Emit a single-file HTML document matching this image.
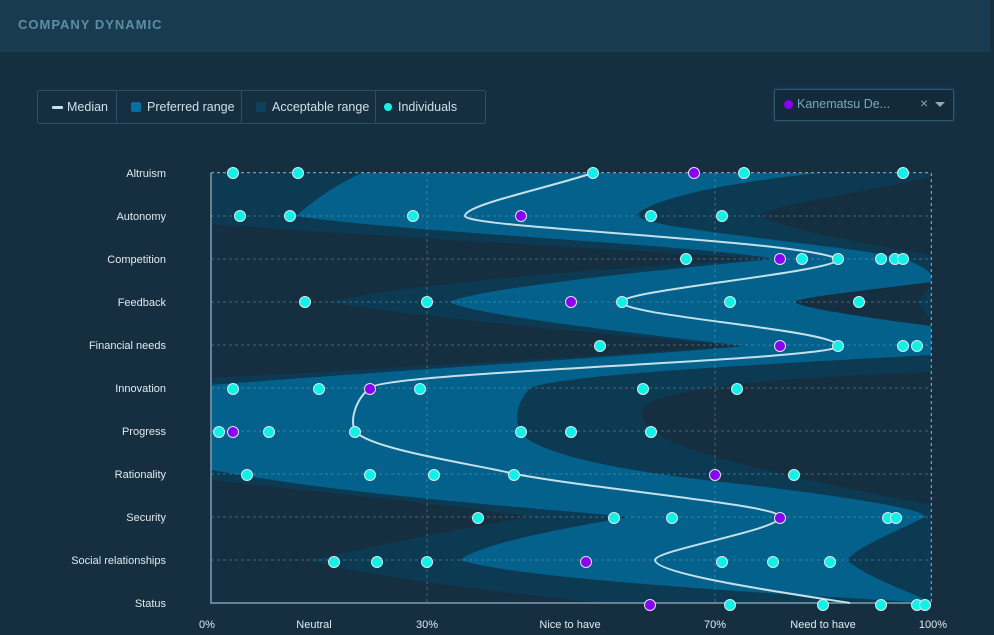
<!DOCTYPE html>
<html><head><meta charset="utf-8"><style>
html,body{margin:0;padding:0;}
body{width:994px;height:635px;background:#152f41;font-family:"Liberation Sans",sans-serif;position:relative;overflow:hidden;}
.hdr{position:absolute;left:0;top:0;width:990px;height:52px;background:#183b4f;}
.hdr span{position:absolute;left:18px;top:17px;font-size:13px;letter-spacing:1px;color:#5e8da6;font-weight:bold;}
.legend{position:absolute;left:37px;top:90px;width:447px;height:32px;border:1px solid #2e5063;border-radius:3px;font-size:12.5px;color:#cfe0e8;}
.legend div{position:absolute;top:0;height:32px;line-height:32px;}
.sep{position:absolute;top:0;width:1px;height:32px;background:#2e5063;}
.dd{position:absolute;left:774px;top:89px;width:178px;height:30px;border:1px solid #2d5a72;border-radius:2px;background:#132a3b;box-shadow:0 0 3px #1d4a63;font-size:12.5px;color:#7ea7bc;}
</style></head><body>
<div class="hdr"><span>COMPANY DYNAMIC</span></div>
<div class="legend">
 <div style="left:14px"><span style="display:inline-block;width:11px;height:3px;background:#bfe3f0;vertical-align:middle;margin-right:4px;border-radius:1px"></span>Median</div>
 <div class="sep" style="left:78px"></div>
 <div style="left:93px"><span style="display:inline-block;width:10px;height:10px;background:#0470a5;vertical-align:middle;margin-right:6px;border-radius:2px;position:relative;top:-1px"></span>Preferred range</div>
 <div class="sep" style="left:203px"></div>
 <div style="left:218px"><span style="display:inline-block;width:10px;height:10px;background:#0d425c;vertical-align:middle;margin-right:6px;border-radius:2px;position:relative;top:-1px"></span>Acceptable range</div>
 <div class="sep" style="left:337px"></div>
 <div style="left:346px"><span style="display:inline-block;width:8px;height:8px;background:#10f5ea;vertical-align:middle;margin-right:6px;border-radius:50%;position:relative;top:-1px"></span>Individuals</div>
</div>
<div class="dd">
 <span style="position:absolute;left:9px;top:10px;width:9px;height:9px;border-radius:50%;background:#8a00f0;"></span>
 <span style="position:absolute;left:22px;top:7px;">Kanematsu De...</span>
 <span style="position:absolute;left:145px;top:5px;color:#8aa2b0;font-size:14px">×</span>
 <span style="position:absolute;left:160px;top:12px;width:0;height:0;border-left:5px solid transparent;border-right:5px solid transparent;border-top:5px solid #9aa8b0"></span>
</div>
<svg width="994" height="635" style="position:absolute;left:0;top:0" font-family="Liberation Sans, sans-serif">
 <g stroke="#a9b8c2" stroke-width="1.5" stroke-dasharray="3 3">
  <path d="M211 173H931M211 216H931M211 259H931M211 302H931M211 345H931M211 388H931M211 431H931M211 474H931M211 517H931M211 560H931M427 173V603M715 173V603M931 173V603"/>
 </g>
 <rect x="211" y="173" width="720" height="430" fill="#0c3a52"/>
 <g fill="#152f41">
  <path d="M931 177C850 195 770 205 760 216C780 228 870 245 931 255Z"/>
  <path d="M211 224C400 238 600 248 765 259C600 268 400 285 330 302C420 318 620 335 737 346C600 356 400 368 211 378Z"/>
  <path d="M931 372C760 378 650 390 642 410C640 440 700 460 931 505Z"/>
  <path d="M211 480C350 495 480 508 530 517C450 530 360 550 310 560C360 575 480 590 600 603L211 603Z"/>
 </g>
 <path fill="#03618b" d="M362 173L820 173C700 185 640 205 637 216C650 230 850 245 905 259C920 265 931 272 931 275L931 355C750 365 560 375 530 388C515 405 515 420 520 431C530 450 600 470 750 485C870 500 925 510 925 517C900 530 860 545 847 560C870 580 920 595 931 603L930 603C800 595 520 580 460 560C480 545 550 530 630 517C500 505 350 495 211 470L211 385C400 370 650 355 745 346C650 335 470 315 450 302C470 290 650 270 775 259C700 245 400 232 296 216C320 195 345 180 362 173Z"/>
 <path fill="#152f41" d="M931 282C870 290 800 297 795 302C800 308 870 318 931 326Z"/>
 <path fill="#0c3a52" d="M931 286C925 294 918 299 918 302C918 305 925 312 931 320Z"/>
 <g stroke="#a9b8c2" stroke-width="1.2" stroke-dasharray="3 3" opacity="0.3">
  <path d="M211 173H931M211 216H931M211 259H931M211 302H931M211 345H931M211 388H931M211 431H931M211 474H931M211 517H931M211 560H931M427 173V603M715 173V603M931 173V603"/>
 </g>
 <path d="M211 173V603H931" fill="none" stroke="#7f9db0" stroke-width="1.5"/>
 <path fill="none" stroke="#c6e0ea" stroke-width="2" d="M593 173C540 190 465 205 465 216C465 228 800 240 838 259C838 272 622 290 622 302C622 316 838 330 838 346C838 360 380 372 370 388C355 400 350 420 355 431C370 450 480 465 515 474C600 490 780 505 780 517C780 530 655 550 655 560C655 575 800 595 850 603"/>
 <g stroke="#dfe7ec" stroke-width="1">
 <g fill="#10f2e8">
  <circle cx="233" cy="173" r="5.5"/><circle cx="298" cy="173" r="5.5"/><circle cx="593" cy="173" r="5.5"/><circle cx="744" cy="173" r="5.5"/><circle cx="903" cy="173" r="5.5"/>
  <circle cx="240" cy="216" r="5.5"/><circle cx="290" cy="216" r="5.5"/><circle cx="413" cy="216" r="5.5"/><circle cx="651" cy="216" r="5.5"/><circle cx="722" cy="216" r="5.5"/>
  <circle cx="686" cy="259" r="5.5"/><circle cx="802" cy="259" r="5.5"/><circle cx="838" cy="259" r="5.5"/><circle cx="881" cy="259" r="5.5"/><circle cx="895" cy="259" r="5.5"/><circle cx="903" cy="259" r="5.5"/>
  <circle cx="305" cy="302" r="5.5"/><circle cx="427" cy="302" r="5.5"/><circle cx="622" cy="302" r="5.5"/><circle cx="730" cy="302" r="5.5"/><circle cx="859" cy="302" r="5.5"/>
  <circle cx="600" cy="346" r="5.5"/><circle cx="838" cy="346" r="5.5"/><circle cx="903" cy="346" r="5.5"/><circle cx="917" cy="346" r="5.5"/>
  <circle cx="233" cy="389" r="5.5"/><circle cx="319" cy="389" r="5.5"/><circle cx="420" cy="389" r="5.5"/><circle cx="643" cy="389" r="5.5"/><circle cx="737" cy="389" r="5.5"/>
  <circle cx="219" cy="432" r="5.5"/><circle cx="269" cy="432" r="5.5"/><circle cx="355" cy="432" r="5.5"/><circle cx="521" cy="432" r="5.5"/><circle cx="571" cy="432" r="5.5"/><circle cx="651" cy="432" r="5.5"/>
  <circle cx="247" cy="475" r="5.5"/><circle cx="370" cy="475" r="5.5"/><circle cx="434" cy="475" r="5.5"/><circle cx="514" cy="475" r="5.5"/><circle cx="794" cy="475" r="5.5"/>
  <circle cx="478" cy="518" r="5.5"/><circle cx="614" cy="518" r="5.5"/><circle cx="672" cy="518" r="5.5"/><circle cx="888" cy="518" r="5.5"/><circle cx="896" cy="518" r="5.5"/>
  <circle cx="334" cy="562" r="5.5"/><circle cx="377" cy="562" r="5.5"/><circle cx="427" cy="562" r="5.5"/><circle cx="722" cy="562" r="5.5"/><circle cx="773" cy="562" r="5.5"/><circle cx="830" cy="562" r="5.5"/>
  <circle cx="730" cy="605" r="5.5"/><circle cx="823" cy="605" r="5.5"/><circle cx="881" cy="605" r="5.5"/><circle cx="917" cy="605" r="5.5"/><circle cx="925" cy="605" r="5.5"/>
 </g>
 <g fill="#8a00f0">
  <circle cx="694" cy="173" r="5.5"/><circle cx="521" cy="216" r="5.5"/><circle cx="780" cy="259" r="5.5"/><circle cx="571" cy="302" r="5.5"/><circle cx="780" cy="346" r="5.5"/><circle cx="370" cy="389" r="5.5"/><circle cx="233" cy="432" r="5.5"/><circle cx="715" cy="475" r="5.5"/><circle cx="780" cy="518" r="5.5"/><circle cx="586" cy="562" r="5.5"/><circle cx="650" cy="605" r="5.5"/>
 </g>
 </g>
 <g font-size="11" fill="#e2e9ed" text-anchor="end">
  <text x="166" y="177">Altruism</text><text x="166" y="220">Autonomy</text><text x="166" y="263">Competition</text><text x="166" y="306">Feedback</text><text x="166" y="349">Financial needs</text><text x="166" y="392">Innovation</text><text x="166" y="435">Progress</text><text x="166" y="478">Rationality</text><text x="166" y="521">Security</text><text x="166" y="564">Social relationships</text><text x="166" y="607">Status</text>
 </g>
 <g font-size="11" fill="#e2e9ed" text-anchor="middle">
  <text x="207" y="628">0%</text><text x="314" y="628">Neutral</text><text x="427" y="628">30%</text><text x="570" y="628">Nice to have</text><text x="715" y="628">70%</text><text x="823" y="628">Need to have</text><text x="933" y="628">100%</text>
 </g>
</svg>
</body></html>
